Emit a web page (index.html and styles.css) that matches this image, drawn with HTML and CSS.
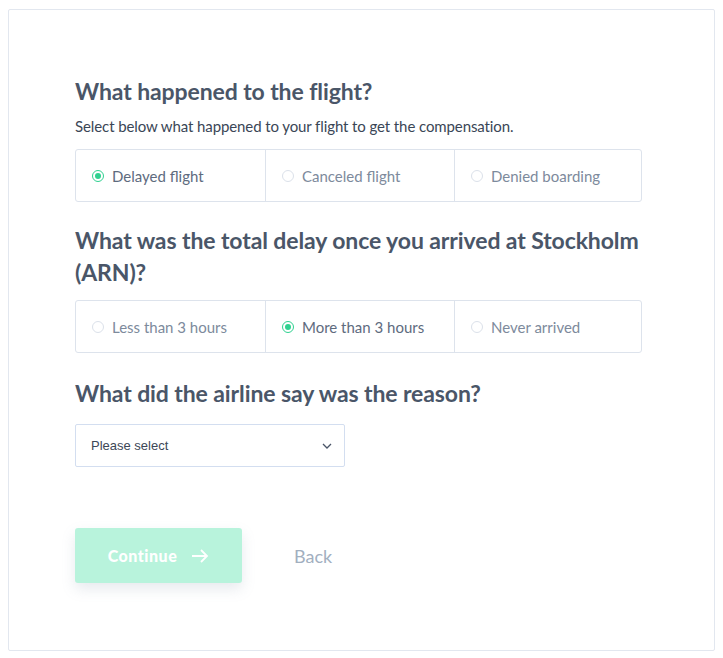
FILE: index.html
```html
<!DOCTYPE html>
<html>
<head>
<meta charset="utf-8">
<link rel="stylesheet" href="styles.css">
</head>
<body>
<div class="card">
  <h2 class="q">What happened to the flight?</h2>
  <p class="sub">Select below what happened to your flight to get the compensation.</p>
  <div class="group">
    <div class="opt sel"><span class="radio"></span><span>Delayed flight</span></div>
    <div class="opt"><span class="radio"></span><span>Canceled flight</span></div>
    <div class="opt"><span class="radio"></span><span>Denied boarding</span></div>
  </div>
  <h2 class="q q2">What was the total delay once you arrived at Stockholm (ARN)?</h2>
  <div class="group">
    <div class="opt"><span class="radio"></span><span>Less than 3 hours</span></div>
    <div class="opt sel"><span class="radio"></span><span>More than 3 hours</span></div>
    <div class="opt"><span class="radio"></span><span>Never arrived</span></div>
  </div>
  <h2 class="q q3">What did the airline say was the reason?</h2>
  <div class="select">
    <span>Please select</span>
    <svg class="chev" width="10" height="6" viewBox="0 0 10 6"><path d="M1 1 L5 5 L9 1" fill="none" stroke="#4a5568" stroke-width="1.3"/></svg>
  </div>
  <div class="actions">
    <div class="btn">Continue
      <svg width="18" height="14" viewBox="0 0 18 14"><path d="M1 7 H16 M10 1 L16 7 L10 13" fill="none" stroke="#fff" stroke-width="1.8"/></svg>
    </div>
    <div class="back">Back</div>
  </div>
</div>
</body>
</html>
```
FILE: styles.css
```css
html, body { margin: 0; padding: 0; background: #fff; }
body { padding: 9px 8px 7px 8px; font-family: "Lato", "Source Sans Pro", sans-serif; }
.card {
  border: 1px solid #e2e7ef;
  border-radius: 2px;
  height: 642px;
  box-sizing: border-box;
  padding: 65px 66px 0 66px;
  width: 707px;
}
.q {
  margin: 0;
  font-size: 23px;
  font-weight: 700;
  color: #4a5668;
  line-height: 32px;
  letter-spacing: -0.1px;
}
.sub {
  margin: 9px 0 13px 0;
  font-size: 15px;
  color: #3a4656;
  line-height: 20px;
  letter-spacing: -0.1px;
}
.group {
  display: grid;
  grid-template-columns: 189px 189px 188px;
  width: 567px;
  border: 1px solid #dde3ec;
  border-radius: 3px;
  box-sizing: border-box;
  height: 53px;
}
.opt {
  display: flex;
  align-items: center;
  padding-left: 16px;
  gap: 8px;
  font-size: 15px;
  color: #7d8a9c;
  border-left: 1px solid #dde3ec;
}
.opt:first-child { border-left: none; }
.opt.sel { color: #5e6b7e; }
.radio {
  width: 10px;
  height: 10px;
  border: 1px solid #dbe1ea;
  border-radius: 50%;
  box-sizing: content-box;
  position: relative;
}
.sel .radio { border-color: #2fd190; }
.sel .radio::after {
  content: "";
  position: absolute;
  left: 2px; top: 2px;
  width: 6px; height: 6px;
  border-radius: 50%;
  background: #2fd190;
}
.q2 { margin-top: 22px; margin-bottom: 12px; }
.q3 { margin-top: 24px; margin-bottom: 15px; }
.select {
  width: 270px;
  height: 43px;
  box-sizing: border-box;
  border: 1px solid #d3def0;
  border-radius: 2px;
  display: flex;
  align-items: center;
  justify-content: space-between;
  padding: 0 12px 0 15px;
  font-family: "Liberation Sans", Arial, sans-serif;
  font-size: 13px;
  color: #3d4757;
}
.actions {
  display: flex;
  align-items: center;
  margin-top: 61px;
  gap: 52px;
}
.btn {
  width: 167px;
  height: 55px;
  background: #b8f3dc;
  border-radius: 3px;
  box-shadow: 0 6px 14px rgba(120, 140, 160, 0.18);
  color: #fff;
  font-weight: 900;
  font-size: 16px;
  display: flex;
  align-items: center;
  justify-content: center;
  gap: 14px;
  letter-spacing: 0.5px;
}
.back {
  color: #a2afbf;
  font-size: 18px;
}
```
